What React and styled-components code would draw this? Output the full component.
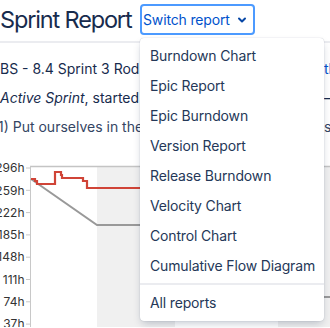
import React from "react";
import styled, { createGlobalStyle } from "styled-components";

const GlobalStyle = createGlobalStyle`
  html, body {
    margin: 0;
    padding: 0;
    background: #fff;
    font-family: Inter, "Noto Sans", "Liberation Sans", sans-serif;
    color: #172b4d;
  }
  body {
    width: 330px;
    height: 328px;
    overflow: hidden;
  }
`;

const Page = styled.div`
  width: 330px;
  height: 328px;
  overflow: hidden;
  position: relative;
`;

const Header = styled.div`
  display: flex;
  align-items: center;
  gap: 10px;
  padding: 4px 0 6px;
  border-bottom: 2px solid #ebecf0;
`;

const Title = styled.h1`
  margin: 0;
  width: 130px;
  font-size: 23.5px;
  font-weight: 400;
  line-height: 31px;
  letter-spacing: -1.15px;
  color: #172b4d;
  white-space: nowrap;
`;

const SwitchWrap = styled.div`
  position: relative;
`;

const SwitchButton = styled.button`
  display: flex;
  align-items: center;
  gap: 7px;
  width: 115px;
  height: 31px;
  padding: 0 0 0 1px;
  border: 2px solid #4c9aff;
  border-radius: 4px;
  background: #fff;
  color: #0052cc;
  font-family: inherit;
  font-size: 14px;
  letter-spacing: -0.15px;
  white-space: nowrap;
`;

const Menu = styled.div`
  position: absolute;
  top: calc(100% + 3px);
  left: 0;
  width: 184px;
  padding: 3px 0;
  background: #fff;
  border-radius: 4px;
  box-shadow: 0 4px 8px -2px rgba(9, 30, 66, 0.25), 0 0 1px rgba(9, 30, 66, 0.31);
  z-index: 10;
`;

const MenuItem = styled.div`
  height: 30px;
  line-height: 30px;
  padding: 0 10px;
  font-size: 14px;
  letter-spacing: -0.15px;
  color: #253858;
  white-space: nowrap;
`;

const MenuDivider = styled.div`
  margin: 2px 0 3px;
  border-top: 2px solid #ebecf0;
`;

const Content = styled.div`
  padding-top: 16px;
  display: flex;
  flex-direction: column;
  gap: 9px;
`;

const Line = styled.div`
  display: grid;
  grid-template-columns: 324px 1fr;
  font-size: 14px;
  line-height: 20px;
  white-space: nowrap;
  overflow: hidden;
  color: ${(p) => p.$tone || "#172b4d"};
`;

const Cell = styled.span`
  overflow: hidden;
  margin-left: ${(p) => p.$shift || 0}px;
`;

const Link = styled.span`
  color: #0052cc;
`;

const ChartBox = styled.div`
  margin-top: 22px;
  height: 168px;
`;

const reports = [
  "Burndown Chart",
  "Epic Report",
  "Epic Burndown",
  "Version Report",
  "Release Burndown",
  "Velocity Chart",
  "Control Chart",
  "Cumulative Flow Diagram",
];

const labels = ["296h", "259h", "222h", "185h", "148h", "111h", "74h", "37h"];

const Chevron = () => (
  <svg width="10" height="10" viewBox="0 0 10 10">
    <path d="M2 3.5 L5 6.5 L8 3.5" fill="none" stroke="#0747a6" strokeWidth="2" strokeLinecap="round" strokeLinejoin="round" />
  </svg>
);

const red = [
  [31, 180], [35, 180], [35, 182], [37, 182], [37, 185], [55, 185], [55, 173],
  [61, 173], [61, 176], [62, 176], [62, 179], [83, 179], [83, 182], [87, 182],
  [87, 189], [300, 189],
];

const guide = [[31, 180], [97, 226], [175, 226], [278, 298], [330, 298]];

const pts = (a, dy) => a.map(([x, y]) => `${x},${y - dy}`).join(" ");

const Chart = () => {
  const top = 160;
  return (
    <svg width="330" height="168" viewBox="0 0 330 168">
      <rect x="97" y={168 - top} width="78" height="168" fill="#f0f0f0" />
      <rect x="278" y={168 - top} width="60" height="168" fill="#f0f0f0" />
      <line x1="30" y1={167.5 - top} x2="330" y2={167.5 - top} stroke="#c4c4c4" strokeWidth="1.5" />
      <line x1="30.5" y1={167 - top} x2="30.5" y2="168" stroke="#c8c8c8" strokeWidth="1" />
      {labels.map((l, i) => {
        const y = 169 + i * 22.3 - top;
        return (
          <g key={l}>
            <line x1="26" y1={y} x2="30" y2={y} stroke="#c8c8c8" strokeWidth="1" />
            <text x="24.5" y={y + 4.2} textAnchor="end" fontSize="12" fill="#333" fontFamily="Inter, sans-serif">
              {l}
            </text>
          </g>
        );
      })}
      <polyline points={pts(guide, top)} fill="none" stroke="#999" strokeWidth="2" />
      <polyline points={pts(red, top)} fill="none" stroke="#d04437" strokeWidth="2.2" />
    </svg>
  );
};

export default function App() {
  return (
    <Page>
      <GlobalStyle />
      <Header>
        <Title>Sprint Report</Title>
        <SwitchWrap>
          <SwitchButton>
            Switch report
            <Chevron />
          </SwitchButton>
          <Menu>
            {reports.map((r) => (
              <MenuItem key={r}>{r}</MenuItem>
            ))}
            <MenuDivider />
            <MenuItem>All reports</MenuItem>
          </Menu>
        </SwitchWrap>
      </Header>
      <Content>
        <Line>
          <Cell>BS - 8.4 Sprint 3 Rodhe team sprint board</Cell>
          <Link>the Issue Navigator</Link>
        </Line>
        <Line>
          <Cell>
            <em>Active Sprint</em>, started Dec 4 2023, ends Dec 18 2023
          </Cell>
          <span>— ends in 3 days</span>
        </Line>
        <Line $tone="#344563">
          <Cell $shift={-2}>1) Put ourselves in the customer's shoes</Cell>
          <span>s</span>
        </Line>
      </Content>
      <ChartBox>
        <Chart />
      </ChartBox>
    </Page>
  );
}
